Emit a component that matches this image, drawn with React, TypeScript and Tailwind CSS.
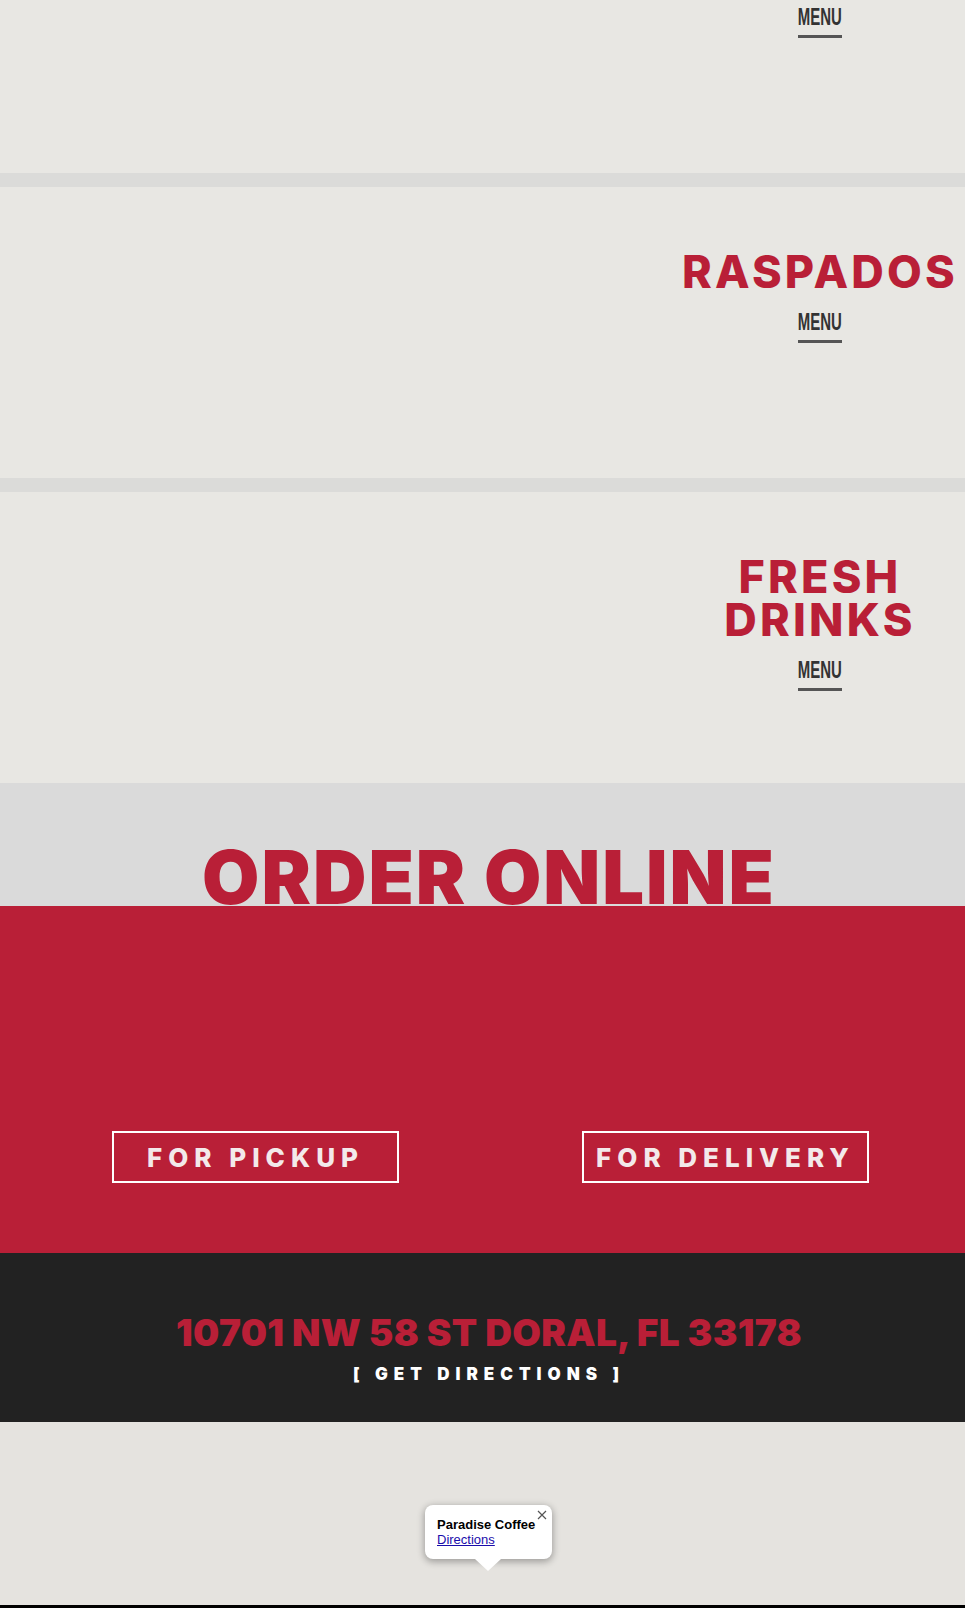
import React from "react";

const RED = "text-[#b91f37]";

function MenuLink() {
  return (
    <div className="flex flex-col items-center">
      <span className="block h-[23px] text-[23px] leading-[23px] font-bold text-[#333333] [font-family:'Liberation_Sans',Arial,sans-serif] scale-x-[0.65] scale-y-[1.06] whitespace-nowrap">
        MENU
      </span>
      <span className="block mt-[6px] h-[3px] w-[44px] bg-[#555555]" />
    </div>
  );
}

function Panel({ lines, first }: { lines?: string[]; first?: boolean }) {
  return (
    <div
      className={
        "flex justify-end bg-[#e8e7e3] " + (first ? "h-[173px]" : "h-[291px]")
      }
    >
      <div
        className={
          "w-[290px] flex flex-col items-center " + (first ? "pt-[6px]" : "pt-[63px]")
        }
      >
        {lines && (
          <div
            className={
              RED +
              " text-center font-extrabold text-[45px] leading-[43px] tracking-[3.2px] mb-[18px] [font-family:Inter,sans-serif]"
            }
          >
            {lines.map((l) => (
              <div key={l}>{l}</div>
            ))}
          </div>
        )}
        <MenuLink />
      </div>
    </div>
  );
}

export default function App() {
  return (
    <div className="w-[965px] min-h-[1608px] bg-[#e5e3df] [font-family:Inter,sans-serif]">
      <div className="flex flex-col gap-[14px] bg-[#dbdbd9]">
        <Panel first />
        <Panel lines={["RASPADOS"]} />
        <Panel lines={["FRESH", "DRINKS"]} />
      </div>

      <div className="h-[123px] bg-[#dadada] overflow-hidden pt-[57px] pl-[13px]">
        <div
          className={
            RED +
            " text-center font-black text-[74px] leading-none tracking-[2px] whitespace-nowrap"
          }
        >
          ORDER ONLINE
        </div>
      </div>

      <div className="h-[347px] bg-[#b91f37] pt-[225px]">
        <div className="flex pl-[112px] gap-[183px]">
          <a className="w-[287px] h-[52px] border-2 border-white flex items-center justify-center text-[#f3e9ea] font-extrabold text-[26px] tracking-[6px] whitespace-nowrap">
            FOR PICKUP
          </a>
          <a className="w-[287px] h-[52px] border-2 border-white flex items-center justify-center text-[#f3e9ea] font-extrabold text-[26px] tracking-[6px] whitespace-nowrap">
            FOR DELIVERY
          </a>
        </div>
      </div>

      <div className="h-[169px] bg-[#222222] pt-[61px] pl-[13px] flex flex-col items-center">
        <div className={RED + " font-black text-[37px] leading-none tracking-[0.3px] whitespace-nowrap"}>
          10701 NW 58 ST DORAL, FL 33178
        </div>
        <div className="mt-[15px] text-white font-black text-[17px] leading-none tracking-[6px] whitespace-nowrap">
          [ GET DIRECTIONS ]
        </div>
      </div>

      <div className="relative h-[183px] bg-[#e5e3df]">
        <div className="absolute left-[425px] top-[83px] w-[127px] h-[54px] bg-white rounded-[8px] shadow-[0_2px_7px_1px_rgba(0,0,0,0.3)] pl-[12px] pt-[12px] [font-family:'Liberation_Sans',Arial,sans-serif]">
          <div className="text-[13px] leading-[15px] font-bold text-black">Paradise Coffee</div>
          <a className="block text-[13px] leading-[15px] text-[#1a0dab] underline">Directions</a>
          <svg
            className="absolute right-[5px] top-[5px]"
            width="10"
            height="10"
            viewBox="0 0 10 10"
          >
            <path d="M1 1L9 9M9 1L1 9" stroke="#555" strokeWidth="1.2" />
          </svg>
          <div className="absolute left-[50px] top-[54px] w-0 h-0 border-l-[13px] border-r-[13px] border-t-[12px] border-l-transparent border-r-transparent border-t-white" />
        </div>
      </div>
      <div className="h-[3px] bg-black" />
    </div>
  );
}
